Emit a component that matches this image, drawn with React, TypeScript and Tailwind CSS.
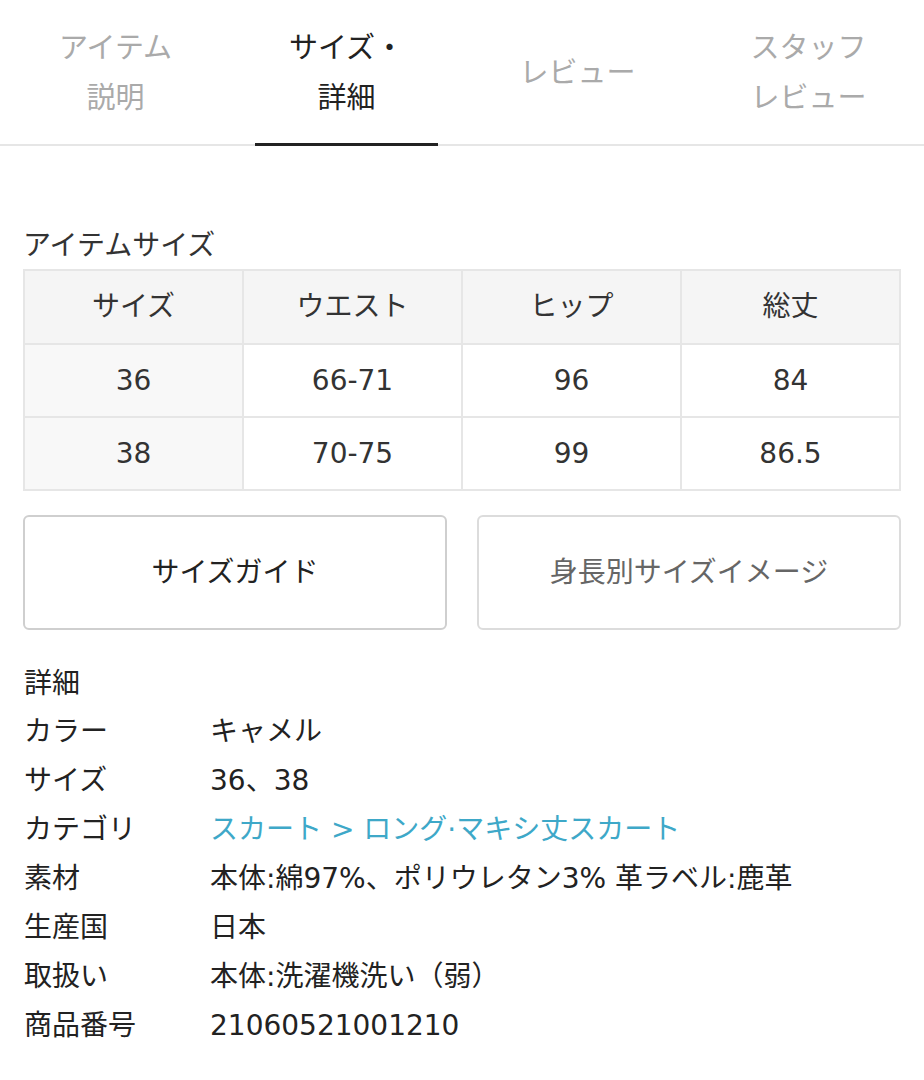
const font = {
  fontFamily: '"DejaVu Sans", "Noto Sans CJK JP", sans-serif',
}

const tabs = [
  { label: ['アイテム', '説明'], active: false },
  { label: ['サイズ・', '詳細'], active: true },
  { label: ['レビュー'], active: false },
  { label: ['スタッフ', 'レビュー'], active: false },
]

const sizeHead = ['サイズ', 'ウエスト', 'ヒップ', '総丈']
const sizeRows = [
  ['36', '66-71', '96', '84'],
  ['38', '70-75', '99', '86.5'],
]

const details: { label: string; value: string; link?: boolean }[] = [
  { label: 'カラー', value: 'キャメル' },
  { label: 'サイズ', value: '36、38' },
  { label: 'カテゴリ', value: 'スカート > ロング·マキシ丈スカート', link: true },
  { label: '素材', value: '本体:綿97%、ポリウレタン3% 革ラベル:鹿革' },
  { label: '生産国', value: '日本' },
  { label: '取扱い', value: '本体:洗濯機洗い（弱）' },
  { label: '商品番号', value: '21060521001210' },
]

function Tabs() {
  return (
    <div className="flex h-[146px] border-b-2 border-[#e6e6e6]">
      {tabs.map((tab, i) => (
        <div key={i} className="relative flex flex-1 items-center justify-center pt-[2px]">
          <div
            className={`text-center text-[29px] leading-[50px] ${
              tab.active ? 'text-[#222]' : 'text-[#aaa]'
            }`}
          >
            {tab.label.map(line => (
              <div key={line}>{line}</div>
            ))}
          </div>
          {tab.active && (
            <span className="absolute bottom-[-2px] left-[24px] right-[24px] h-[3px] bg-[#222]" />
          )}
        </div>
      ))}
    </div>
  )
}

function SizeTable() {
  return (
    <div className="px-[23px]">
      <h2 className="mb-[5px] mt-[82px] text-[28px] leading-[36px] text-[#333]">アイテムサイズ</h2>
      <table className="w-full table-fixed border-collapse text-[28px] text-[#333]">
        <thead>
          <tr>
            {sizeHead.map(h => (
              <th key={h} className="h-[74px] border-2 border-[#e6e6e6] bg-[#f5f5f5] font-normal">
                {h}
              </th>
            ))}
          </tr>
        </thead>
        <tbody>
          {sizeRows.map(row => (
            <tr key={row[0]}>
              {row.map((cell, i) => (
                <td
                  key={i}
                  className={`h-[73px] border-2 border-[#e6e6e6] text-center ${
                    i === 0 ? 'bg-[#f8f8f8]' : 'bg-white'
                  }`}
                >
                  {cell}
                </td>
              ))}
            </tr>
          ))}
        </tbody>
      </table>
    </div>
  )
}

function Buttons() {
  return (
    <div className="mt-[24px] flex gap-[30px] px-[23px]">
      <button className="flex h-[115px] flex-1 items-center justify-center rounded-[6px] border-2 border-[#cfcfcf] text-[28px] text-[#222]">
        サイズガイド
      </button>
      <button className="flex h-[115px] flex-1 items-center justify-center rounded-[6px] border-2 border-[#dcdcdc] text-[28px] text-[#666]">
        身長別サイズイメージ
      </button>
    </div>
  )
}

function Details() {
  return (
    <div className="mt-[30px] px-[24px] text-[28px] leading-[49px] text-[#222]">
      <div className="leading-[47px]">詳細</div>
      {details.map(d => (
        <div key={d.label} className="flex">
          <div className="w-[186px] shrink-0">{d.label}</div>
          <div className={d.link ? 'text-[#3ea8c8]' : ''}>{d.value}</div>
        </div>
      ))}
    </div>
  )
}

export default function App() {
  return (
    <div className="min-h-[1080px] w-[924px] bg-white" style={font}>
      <Tabs />
      <SizeTable />
      <Buttons />
      <Details />
    </div>
  )
}
